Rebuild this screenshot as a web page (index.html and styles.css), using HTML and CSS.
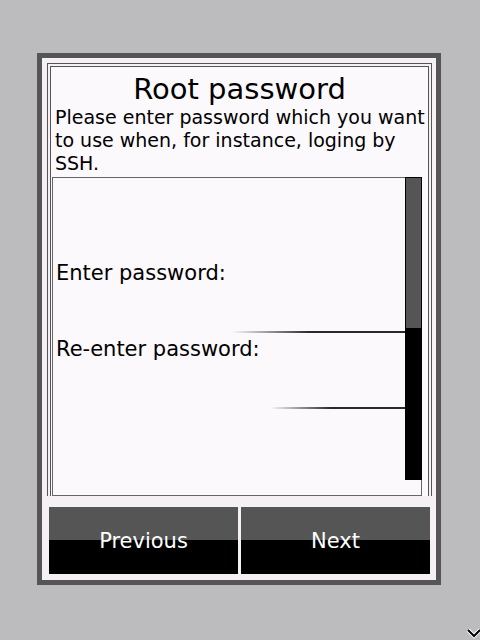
FILE: index.html
```html
<!DOCTYPE html>
<html>
<head>
<meta charset="utf-8">
<link rel="stylesheet" href="styles.css">
</head>
<body>
<div class="frame">
  <div class="panel">
    <div class="panel-inner">
      <h1 class="title">Root password</h1>
      <p class="intro">Please enter password which you want to use when, for instance, loging by SSH.</p>
      <div class="scrollbox">
        <div class="fields">
          <div class="label">Enter password:</div>
          <div class="input"><div class="line line-a"></div></div>
          <div class="label">Re-enter password:</div>
          <div class="input"><div class="line line-b"></div></div>
        </div>
        <div class="scrollbar"><div class="thumb"></div></div>
      </div>
    </div>
  </div>
  <div class="buttons">
    <div class="btn">Previous</div>
    <div class="btn">Next</div>
  </div>
</div>
<svg class="cursor" width="16" height="12" viewBox="0 0 16 12">
  <path d="M2 2 L8 8 L14 2" fill="none" stroke="#fff" stroke-width="4"/>
  <path d="M2 2 L8 8 L14 2" fill="none" stroke="#000" stroke-width="2"/>
</svg>
</body>
</html>
```
FILE: styles.css
```css
html, body {
  margin: 0;
  padding: 0;
}
body {
  background: #bcbbbe;
  width: 480px;
  height: 640px;
  overflow: hidden;
  position: relative;
  font-family: "DejaVu Sans", sans-serif;
  color: #000;
}
.frame {
  box-sizing: border-box;
  margin: 53px 0 0 37px;
  width: 404px;
  height: 532px;
  border: 5px solid #555555;
  background: #f4f0f4;
  padding: 5px 4px 6px 5px;
  display: flex;
  flex-direction: column;
}
.panel {
  border: 1px solid #555555;
  border-bottom: none;
  padding: 2px 2px 0 2px;
}
.panel-inner {
  border: 1px solid #555555;
  border-bottom: none;
  background: #fcf9fc;
  display: flex;
  flex-direction: column;
}
.title {
  margin: 6px 0 0 0;
  font-size: 29px;
  font-weight: normal;
  line-height: 32px;
  text-align: center;
}
.intro {
  margin: 0;
  padding: 1px 0 0 4px;
  font-size: 19px;
  line-height: 23px;
}
.scrollbox {
  margin: 2px 0 0 1px;
  width: 370px;
  height: 319px;
  box-sizing: border-box;
  border: 1px solid #666666;
  display: flex;
  background: #fcf9fc;
}
.fields {
  flex: 1;
  padding-top: 84px;
  display: flex;
  flex-direction: column;
}
.label {
  font-size: 21px;
  line-height: 23px;
  padding-left: 3px;
}
.input {
  height: 48px;
  display: flex;
  align-items: flex-end;
  justify-content: flex-end;
  margin-bottom: 5px;
}
.line {
  height: 2px;
  background: linear-gradient(to right, rgba(40,40,40,0), #2a2a2a 45%, #2a2a2a);
}
.line-a { width: 173px; }
.line-b { width: 135px; }
.scrollbar {
  width: 17px;
  height: 303px;
  box-sizing: border-box;
  margin: -1px -1px 0 0;
  background: #000;
  border: 1px solid #000;
}
.thumb {
  height: 150px;
  background: #555555;
}
.buttons {
  margin: 11px 0 0 2px;
  width: 381px;
  display: flex;
  gap: 3px;
}
.btn {
  flex: 1;
  height: 67px;
  background: linear-gradient(#555555 0, #555555 33px, #000 33px);
  color: #fff;
  font-size: 21px;
  display: flex;
  align-items: center;
  justify-content: center;
}
.cursor {
  position: absolute;
  left: 466px;
  top: 628px;
}
```
